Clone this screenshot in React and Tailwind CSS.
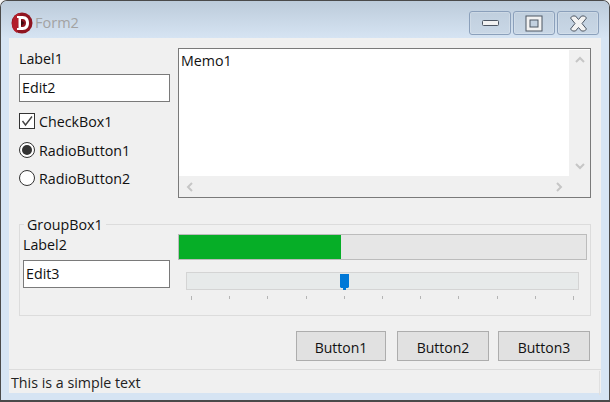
import React from "react";

const font = { fontFamily: '"Open Sans", "Noto Sans", sans-serif' };

function CaptionButton({ children }) {
  return (
    <div className="h-6 w-[42px] rounded-[3px] border border-[#8ba0bb] bg-gradient-to-b from-[#c0cfde] to-[#c9d7e6] shadow-[inset_0_0_0_1px_rgba(255,255,255,0.2)] flex items-center justify-center">
      {children}
    </div>
  );
}

function Logo() {
  return (
    <svg width="22" height="22" viewBox="0 0 22 22">
      <circle cx="11" cy="11" r="10.5" fill="#8f1420" />
      <path d="M2 7 A10 10 0 0 1 9 1 L6 21 A10 10 0 0 1 1 12 Z" fill="#b31f2c" />
      <path d="M6 4 H11.5 C16 4 18 7 18 11 C18 15 16 18 11.5 18 H6 V16 H7.5 V6 H6 Z" fill="#fff" />
      <path d="M10 7 H11.5 C14 7 15 9 15 11 C15 13 14 15 11.5 15 H10 Z" fill="#8f1420" />
      <path d="M10 8 L13.5 11 L10 14 Z" fill="#3a0a10" />
    </svg>
  );
}

function Input({ value, w }) {
  return (
    <div className={`${w} h-7 shrink-0 border border-[#7a7a7a] bg-white pl-[2px] text-[14.25px] leading-[26px] text-[#111]`}>
      {value}
    </div>
  );
}

function Radio({ label, checked, mt }) {
  return (
    <div className={`flex items-center h-[18px] ${mt}`}>
      <div className="w-4 h-4 rounded-full border border-[#333] bg-white flex items-center justify-center">
        {checked && <div className="w-[10px] h-[10px] rounded-full bg-[#333]" />}
      </div>
      <span className="ml-1 pt-[2px] text-[14.25px] text-[#111]">{label}</span>
    </div>
  );
}

function Chevron({ d }) {
  return (
    <svg width="10" height="10" viewBox="0 0 10 10">
      <path d={d} fill="none" stroke="#c6c6c6" strokeWidth="2" />
    </svg>
  );
}

function Button({ label, w }) {
  return (
    <div className={`${w} h-[30px] border border-[#adadad] bg-[#e1e1e1] flex items-center justify-center pt-[2px] text-[14px] text-[#111]`}>
      {label}
    </div>
  );
}

export default function App() {
  const ticks = [0, 1, 2, 3, 4, 5, 6, 7, 8, 9, 10];
  return (
    <div style={font} className="w-[610px] h-[402px] bg-[#f4f4f4]">
      <div className="w-full h-full rounded-t-[7px] border border-[#4a4a4a] border-b-2 bg-[#d6e4f3] flex flex-col overflow-hidden">
        {/* title bar */}
        <div className="h-[37px] shrink-0 bg-gradient-to-b from-[#bccbda] to-[#d6e4f3] flex items-start">
          <div className="ml-[10px] mt-[11px]"><Logo /></div>
          <div className="ml-[2px] mt-[12px] text-[14.5px] leading-[20px] text-[#a3a3a3]">Form2</div>
          <div className="ml-auto mr-[10px] mt-[10px] flex gap-[2px]">
            <CaptionButton>
              <svg width="19" height="8" viewBox="0 0 19 8">
                <rect x="1.5" y="1.5" width="16" height="5" rx="1" fill="#f2f2f2" stroke="#4d5663" />
              </svg>
            </CaptionButton>
            <CaptionButton>
              <svg width="18" height="17" viewBox="0 0 18 17">
                <rect x="1" y="1" width="16" height="15" fill="#f2f2f2" stroke="#4d5663" />
                <rect x="5" y="5" width="8" height="7" fill="#c3d1e0" stroke="#4d5663" />
              </svg>
            </CaptionButton>
            <CaptionButton>
              <svg width="19" height="17" viewBox="0 0 19 17">
                <path d="M1.5 3 L3.5 1 H6.5 L9.5 4.5 L12.5 1 H15.5 L17.5 3 L13 8.5 L17.5 14 L15.5 16 H12.5 L9.5 12.5 L6.5 16 H3.5 L1.5 14 L6 8.5 Z" fill="#f2f2f2" stroke="#4d5663" />
              </svg>
            </CaptionButton>
          </div>
        </div>

        {/* client area */}
        <div className="mx-2 h-[355px] shrink-0 bg-[#f0f0f0] flex flex-col">
          <div className="flex pl-[10px] pt-[10px] h-[160px] shrink-0">
            <div className="w-[151px] flex flex-col">
              <div className="h-[19px] mt-px text-[14.25px] leading-[19px] text-[#111]">Label1</div>
              <div className="mt-[6px]"><Input value="Edit2" w="w-[151px]" /></div>
              <div className="flex items-center h-[18px] mt-[10px]">
                <div className="w-4 h-4 border border-[#333] bg-white flex items-center justify-center">
                  <svg width="14" height="14" viewBox="0 0 14 14">
                    <path d="M2.5 7 L5.5 11 L12 2.5" fill="none" stroke="#444" strokeWidth="1.4" />
                  </svg>
                </div>
                <span className="ml-1 pt-[2px] text-[14.25px] text-[#111]">CheckBox1</span>
              </div>
              <Radio label="RadioButton1" checked mt="mt-[11px]" />
              <Radio label="RadioButton2" mt="mt-[10px]" />
            </div>
            <div className="ml-2 w-[413px] h-[150px] border border-[#7a7a7a] bg-white flex flex-col">
              <div className="flex h-[127px] shrink-0">
                <div className="flex-1 pl-[2px] pt-[2px] text-[14.25px] leading-[20px] text-[#111]">Memo1</div>
                <div className="w-[21px] bg-[#f0f0f0] mt-px flex flex-col items-center justify-between pt-[5px] pb-[5px]">
                  <Chevron d="M1 7 L5 3 L9 7" />
                  <Chevron d="M1 3 L5 7 L9 3" />
                </div>
              </div>
              <div className="flex-1 bg-[#f0f0f0] flex items-center justify-between pl-[6px] pr-[26px]">
                <Chevron d="M7 1 L3 5 L7 9" />
                <Chevron d="M3 1 L7 5 L3 9" />
              </div>
            </div>
          </div>

          {/* group box */}
          <div className="relative ml-[10px] mt-[26px] w-[572px] h-[92px] shrink-0 border border-[#dcdcdc] flex pl-[3px]">
            <div className="absolute left-[4px] -top-[9px] bg-[#f0f0f0] px-[3px] text-[14.25px] leading-[17px] text-[#111]">GroupBox1</div>
            <div className="w-[147px] flex flex-col pt-[10px]">
              <div className="h-[19px] text-[14.25px] leading-[19px] text-[#111]">Label2</div>
              <div className="mt-[6px]"><Input value="Edit3" w="w-[147px]" /></div>
            </div>
            <div className="ml-2 w-[409px] flex flex-col pt-[9px]">
              <div className="h-[26px] border border-[#bcbcbc] bg-[#e6e6e6]">
                <div className="w-[162px] h-full bg-[#06ae27]" />
              </div>
              <div className="relative mt-3 ml-2 w-[393px] h-[18px] border border-[#d4d4d4] bg-[#e7eaea]">
                <svg className="absolute left-[153px] top-[1px]" width="9" height="17" viewBox="0 0 9 17">
                  <path d="M0 0 H9 V13 L8 14 H6 V16 H3 V14 H1 L0 13 Z" fill="#0078d7" />
                </svg>
              </div>
              <div className="mt-[6px] ml-[13px] w-[383px] flex justify-between items-start">
                {ticks.map((t) => (
                  <div key={t} className={`w-px bg-[#b5b5b5] ${t === 0 || t === 10 ? "h-1" : "h-[3px]"}`} />
                ))}
              </div>
            </div>
          </div>

          <div className="flex justify-end mt-[15px] pr-[11px] shrink-0">
            <Button label="Button1" w="w-[90px]" />
            <div className="ml-[11px]"><Button label="Button2" w="w-[92px]" /></div>
            <div className="ml-[9px]"><Button label="Button3" w="w-[92px]" /></div>
          </div>

          <div className="mt-2 flex-1 border-t border-[#dcdcdc] flex pl-[2px]">
            <div className="flex-1 text-[14.25px] leading-[25px] text-[#222]">This is a simple text</div>
            <div className="w-px mr-[1px] mt-px bg-[#e0e0e0]" />
          </div>
        </div>
      </div>
    </div>
  );
}
